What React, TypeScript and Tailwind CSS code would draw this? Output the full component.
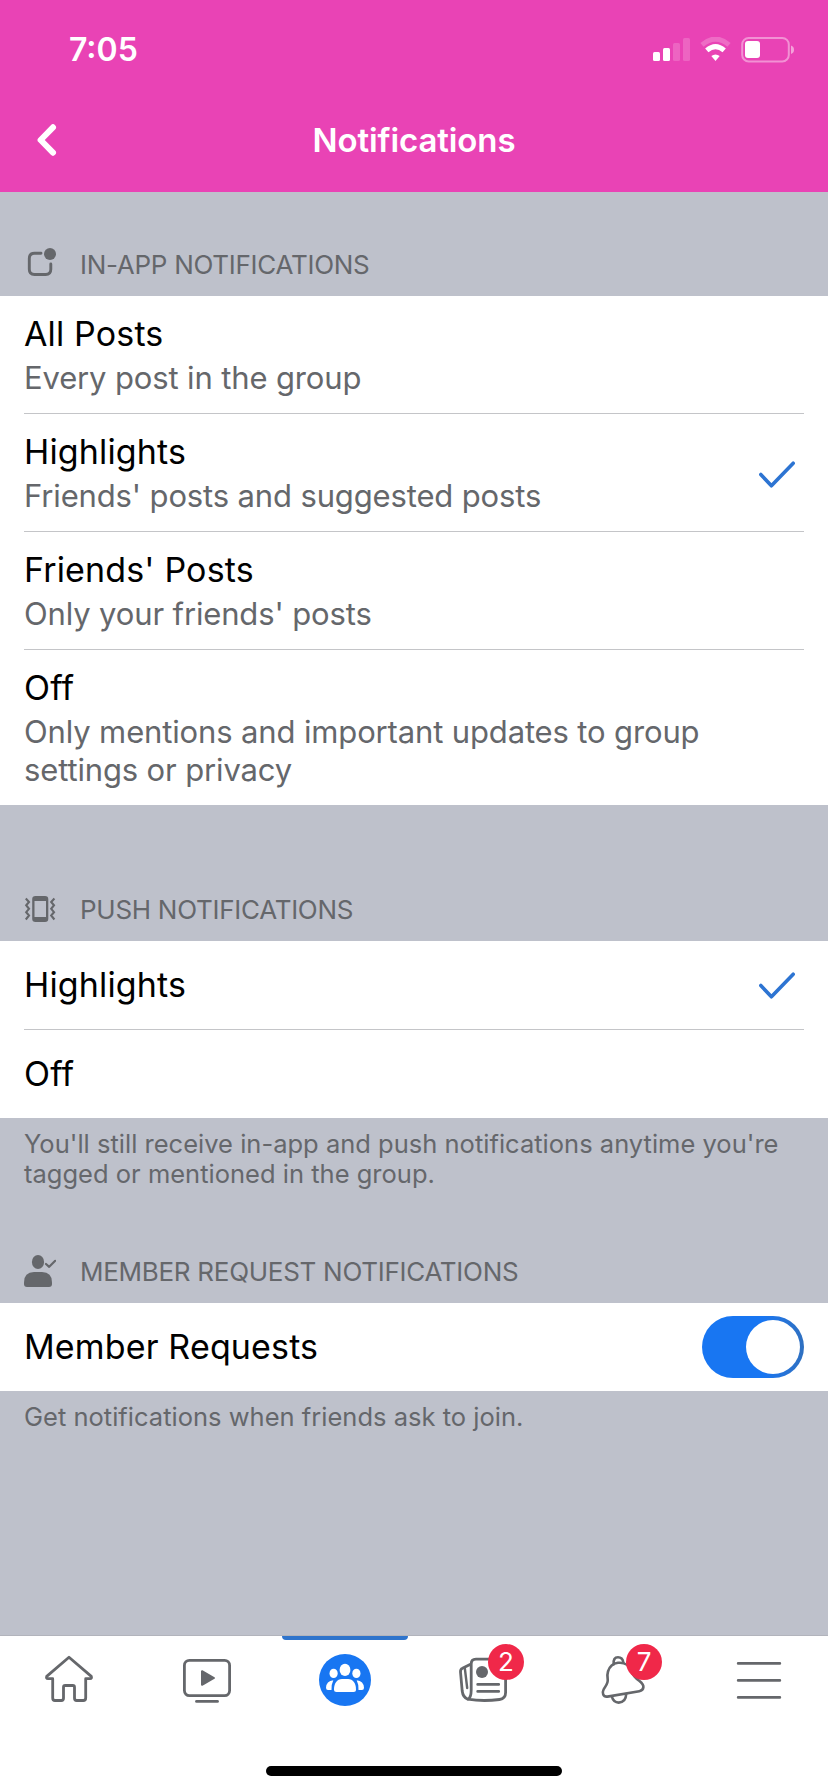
import type { ReactNode } from "react";

const inAppOptions = [
  { title: "All Posts", text: "Every post in the group" },
  {
    title: "Highlights",
    text: "Friends' posts and suggested posts",
    selected: true,
  },
  { title: "Friends' Posts", text: "Only your friends' posts" },
  {
    title: "Off",
    text: "Only mentions and important updates to group settings or privacy",
  },
];

const pushOptions = [
  { title: "Highlights", selected: true },
  { title: "Off", selected: false },
];

function StatusIcons() {
  return (
    <div className="flex items-center gap-[10px]">
      <svg width="37" height="26" viewBox="0 0 37 26" fill="#fff">
        <rect x="0" y="15" width="7" height="9" rx="1.5" />
        <rect x="10" y="11" width="7" height="13" rx="1.5" />
        <rect x="20" y="6" width="7" height="18" rx="1.5" opacity="0.18" />
        <rect x="30" y="1" width="7" height="23" rx="1.5" opacity="0.18" />
      </svg>
      <svg width="31" height="26" viewBox="0 0 31 26" fill="none">
        <path
          d="M2 7.8Q15.5 -3.6 29 7.8"
          stroke="#fff"
          strokeWidth="5"
          opacity="0.22"
        />
        <path d="M6.8 13.4Q15.5 5.8 24.2 13.4" stroke="#fff" strokeWidth="5" />
        <path d="M11.3 19Q15.5 16 19.7 19L15.5 24Z" fill="#fff" />
      </svg>
      <svg width="53" height="26" viewBox="0 0 53 26">
        <rect
          x="1.2"
          y="1"
          width="46.6"
          height="23.4"
          rx="6.5"
          fill="none"
          stroke="#fff"
          strokeWidth="2"
          opacity="0.42"
        />
        <rect x="4" y="4" width="15" height="17" rx="3" fill="#fff" />
        <path d="M50 8.5Q53 9.5 53 12.8Q53 16 50 17Z" fill="#fff" opacity="0.5" />
      </svg>
    </div>
  );
}

function CheckIcon() {
  return (
    <svg
      className="mr-[9px] shrink-0"
      width="36"
      height="28"
      viewBox="0 0 36 28"
      fill="none"
      stroke="#2d74d2"
      strokeWidth="3.6"
      strokeLinecap="round"
      strokeLinejoin="round"
    >
      <path d="M1.8 14.5L12.4 25.8L34.2 3.2" />
    </svg>
  );
}

function InAppIcon() {
  return (
    <svg width="32" height="36" viewBox="0 -2 32 36" fill="none">
      <path
        d="M17 4.2H10.5Q5.3 4.2 5.3 9.4V20.3Q5.3 25.5 10.5 25.5H21.7Q26.8 25.5 26.8 20.3V15"
        stroke="#65676b"
        strokeWidth="2.9"
        strokeLinecap="round"
      />
      <circle cx="26" cy="5" r="6" fill="#65676b" />
    </svg>
  );
}

function PushIcon() {
  return (
    <svg width="32" height="36" viewBox="0 -2 32 36" fill="none">
      <path
        d="M11.5 2H21Q24.3 2 24.3 5.3V24.7Q24.3 28 21 28H11.5Q8.2 28 8.2 24.7V5.3Q8.2 2 11.5 2ZM10.5 7V23H22V7Z"
        fill="#65676b"
        fillRule="evenodd"
      />
      <path
        d="M1.8 4.5L5 8L2.2 11.2L5 14.8L2.2 18.2L5 21.5L1.8 25.5M30.4 4.5L27.2 8L30 11.2L27.2 14.8L30 18.2L27.2 21.5L30.4 25.5"
        stroke="#65676b"
        strokeWidth="2.1"
      />
    </svg>
  );
}

function MemberIcon() {
  return (
    <svg width="32" height="36" viewBox="0 -2 32 36" fill="none">
      <ellipse cx="14" cy="6" rx="6.1" ry="7" fill="#65676b" />
      <path
        d="M10 16H18Q28 16 28 26.5V28Q28 31 25 31H3Q0 31 0 28V26.5Q0 16 10 16Z"
        fill="#65676b"
      />
      <path
        d="M22 8L25.2 10.8L31.2 4.8"
        stroke="#65676b"
        strokeWidth="2.2"
        strokeLinecap="round"
        strokeLinejoin="round"
      />
    </svg>
  );
}

function SectionHeader({
  icon,
  className,
  children,
}: {
  icon: ReactNode;
  className: string;
  children: ReactNode;
}) {
  return (
    <div className={`flex items-end px-6 pb-[15px] ${className}`}>
      <div className="flex h-8 items-center gap-[24px]">
        {icon}
        <h2 className="text-[26px] leading-8 tracking-[-0.28px] text-[#65676b]">
          {children}
        </h2>
      </div>
    </div>
  );
}

function Footer({ children }: { children: ReactNode }) {
  return (
    <p className="px-6 pt-[11px] text-[25.5px] leading-[30px] tracking-[0.01px] text-[#65676b]">
      {children}
    </p>
  );
}

function HomeIcon() {
  return (
    <svg
      width="56"
      height="56"
      viewBox="0 0 56 56"
      fill="none"
      stroke="#65676b"
      strokeWidth="2.8"
      strokeLinejoin="round"
    >
      <path d="M28 5.2L5.7 24.4Q4.9 26.7 7 26.7H11.7V46Q11.7 48.5 14 48.5H20.3Q22.5 48.5 22.5 46.3V35.2Q22.5 33.5 24.2 33.5H31.8Q33.5 33.5 33.5 35.2V46.3Q33.5 48.5 35.7 48.5H42.2Q44.7 48.5 44.7 46V26.7H49Q51.1 26.7 50.3 24.4Z" />
    </svg>
  );
}

function WatchIcon() {
  return (
    <svg
      width="56"
      height="56"
      viewBox="0 0 56 56"
      fill="none"
      stroke="#65676b"
      strokeWidth="2.8"
      strokeLinecap="round"
      strokeLinejoin="round"
    >
      <rect x="5.4" y="8.4" width="45.2" height="35.2" rx="5" />
      <path d="M17.5 49.4H38.5" />
      <path d="M23 19.2V32.8L35 26Z" fill="#65676b" strokeWidth="2" />
    </svg>
  );
}

function GroupsIcon() {
  return (
    <svg width="56" height="56" viewBox="0 0 56 56" fill="#fff">
      <circle cx="28" cy="28" r="26" fill="#1876f2" />
      <ellipse cx="28" cy="17.9" rx="5.4" ry="6.1" />
      <ellipse cx="16.6" cy="21.4" rx="4.1" ry="4.7" />
      <ellipse cx="39.4" cy="21.4" rx="4.1" ry="4.7" />
      <path d="M25 27H31C36 27 39 31.5 39 37.5Q39 40 36.5 40H19.5Q17 40 17 37.5C17 31.5 20 27 25 27Z" />
      <path d="M16.3 28.2Q14.3 32 14.5 38H11Q9 38 9 35.8Q9.3 28.8 16.3 28.2Z" />
      <path d="M39.7 28.2Q41.7 32 41.5 38H45Q47 38 47 35.8Q46.7 28.8 39.7 28.2Z" />
    </svg>
  );
}

function NewsIcon() {
  return (
    <svg
      width="56"
      height="56"
      viewBox="0 0 56 56"
      fill="none"
      stroke="#65676b"
      strokeWidth="2.8"
      strokeLinecap="round"
      strokeLinejoin="round"
    >
      <path d="M12.8 47.2Q16.2 46 16.2 38V12Q16.2 7.2 21 7.2H46Q50.6 7.2 50.6 12V40.5Q50.6 46.6 44.5 47.5Q28 49.6 12.8 47.2Q8 45.5 7.2 39L5.5 20Q5.3 17.3 7.5 16.3L15.5 12.3" />
      <path d="M9.8 16L12.2 36" strokeWidth="2.4" />
      <circle cx="27" cy="20" r="6" fill="#65676b" stroke="none" />
      <path d="M22.7 32.4H43.7M22.7 39.4H43.7" />
    </svg>
  );
}

function BellIcon() {
  return (
    <svg
      width="56"
      height="56"
      viewBox="0 0 56 56"
      fill="none"
      stroke="#65676b"
      strokeWidth="2.6"
      strokeLinecap="round"
      strokeLinejoin="round"
    >
      <path d="M20.7 12.3Q20 5.3 25 5.3Q29.5 5.3 30.4 10.6" />
      <path d="M14.5 44.6C10 45.2 8.8 41 10.6 37.5C12.5 34 15.3 31.5 14.7 27.5C14.2 24.5 14.2 22 15 19.5C16.5 14.5 20 11.5 25 10.8C32 10 36.5 14 38.3 19C40 24 43 26.5 46.5 29C49 31 50.6 32.8 50.4 35.2C50.2 37.5 48.5 38.8 46.3 39.2Z" />
      <path d="M18.8 44.5C20 49 22.5 50.6 25.7 50.6C30 50.4 33 47.5 33.2 42" />
    </svg>
  );
}

function MenuIcon() {
  return (
    <svg
      width="56"
      height="56"
      viewBox="0 0 56 56"
      stroke="#65676b"
      strokeWidth="2.8"
      strokeLinecap="round"
    >
      <path d="M7.2 11.4H48.8M7.2 28.4H48.8M7.2 45.4H48.8" />
    </svg>
  );
}

const tabs = [
  { name: "home", icon: <HomeIcon /> },
  { name: "watch", icon: <WatchIcon /> },
  { name: "groups", icon: <GroupsIcon />, active: true },
  { name: "news", icon: <NewsIcon />, badge: 2 },
  { name: "alerts", icon: <BellIcon />, badge: 7 },
  { name: "menu", icon: <MenuIcon /> },
];

function App() {
  return (
    <div className="flex h-[1792px] w-full flex-col bg-[#bec1cb] font-[Inter,sans-serif]">
      <header className="h-48 bg-[#e943b5] text-white">
        <div className="flex items-center justify-between pt-[34px] pr-[34px] pl-[69px]">
          <span className="text-[32px] leading-8 font-semibold">7:05</span>
          <StatusIcons />
        </div>
        <div className="mt-[54px] grid grid-cols-[1fr_auto_1fr] items-center px-9">
          <svg
            width="22"
            height="34"
            viewBox="0 0 22 34"
            fill="none"
            stroke="#fff"
            strokeWidth="6"
            strokeLinecap="round"
            strokeLinejoin="round"
          >
            <path d="M17 4.3L4.6 17L17 29.7" />
          </svg>
          <h1 className="text-[33px] leading-10 font-semibold tracking-[-0.1px]">
            Notifications
          </h1>
        </div>
      </header>

      <SectionHeader icon={<InAppIcon />} className="h-[104px]">
        IN-APP NOTIFICATIONS
      </SectionHeader>
      <ul className="bg-white px-6">
        {inAppOptions.map((option) => (
          <li
            key={option.title}
            className="flex items-center justify-between border-b border-[#c4c5c8] pt-[18px] pb-4 last:border-b-0"
          >
            <div className="max-w-[710px]">
              <h3 className="text-[34px] leading-10 tracking-[0.15px] text-black">
                {option.title}
              </h3>
              <p className="mt-[5px] text-[31px] leading-[38px] tracking-[-0.14px] text-[#65676b]">
                {option.text}
              </p>
            </div>
            {option.selected && <CheckIcon />}
          </li>
        ))}
      </ul>

      <SectionHeader icon={<PushIcon />} className="h-[136px]">
        PUSH NOTIFICATIONS
      </SectionHeader>
      <ul className="bg-white px-6">
        {pushOptions.map((option) => (
          <li
            key={option.title}
            className="flex items-center justify-between border-b border-[#c4c5c8] py-6 last:border-b-0"
          >
            <h3 className="text-[34px] leading-10 tracking-[0.15px] text-black">
              {option.title}
            </h3>
            {option.selected && <CheckIcon />}
          </li>
        ))}
      </ul>
      <Footer>
        You'll still receive in-app and push notifications anytime you're tagged
        or mentioned in the group.
      </Footer>

      <SectionHeader icon={<MemberIcon />} className="h-[114px]">
        MEMBER REQUEST NOTIFICATIONS
      </SectionHeader>
      <div className="flex h-[88px] items-center justify-between bg-white px-6">
        <h3 className="text-[34px] leading-10 tracking-[0.15px] text-black">
          Member Requests
        </h3>
        <div className="flex h-[62px] w-[102px] items-center justify-end rounded-full bg-linear-to-r from-[#1876f2] from-60% to-[#2f70c0] pr-1">
          <div className="size-[54px] rounded-full bg-white" />
        </div>
      </div>
      <Footer>Get notifications when friends ask to join.</Footer>

      <nav className="mt-auto flex h-[157px] flex-col items-center justify-between border-t border-[#b2b4bc] bg-white pb-4">
        <div className="grid w-full grid-cols-6">
          {tabs.map((tab) => (
            <div
              key={tab.name}
              className="relative flex justify-center pt-4"
            >
              {tab.active && (
                <div className="absolute top-0 h-1 w-[126px] rounded-b-[4px] bg-[#2f74cc]" />
              )}
              <div className="relative">
                {tab.icon}
                {tab.badge && (
                  <span className="absolute -top-2 left-[33px] flex size-9 items-center justify-center rounded-full bg-[#f02849] text-[26px] leading-none text-white">
                    {tab.badge}
                  </span>
                )}
              </div>
            </div>
          ))}
        </div>
        <div className="h-[10px] w-[296px] rounded-full bg-black" />
      </nav>
    </div>
  );
}

export default App;
